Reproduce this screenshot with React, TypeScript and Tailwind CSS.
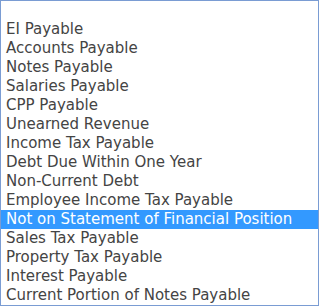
const items = [
  'EI Payable',
  'Accounts Payable',
  'Notes Payable',
  'Salaries Payable',
  'CPP Payable',
  'Unearned Revenue',
  'Income Tax Payable',
  'Debt Due Within One Year',
  'Non-Current Debt',
  'Employee Income Tax Payable',
  'Not on Statement of Financial Position',
  'Sales Tax Payable',
  'Property Tax Payable',
  'Interest Payable',
  'Current Portion of Notes Payable',
]

const selected = 10

export default function App() {
  return (
    <div className="w-[319px] h-[306px] bg-white border border-[#7a9cd3] pt-[19px] overflow-hidden" style={{ fontFamily: '"DejaVu Sans", Verdana, sans-serif' }}>
      {items.map((item, i) => (
        <div
          key={item}
          className={
            'h-[19px] leading-[19px] pl-[5px] text-[15px] whitespace-nowrap ' +
            (i === selected ? 'bg-[#3399ff] text-white' : 'text-[#444]')
          }
        >
          {item}
        </div>
      ))}
    </div>
  )
}
